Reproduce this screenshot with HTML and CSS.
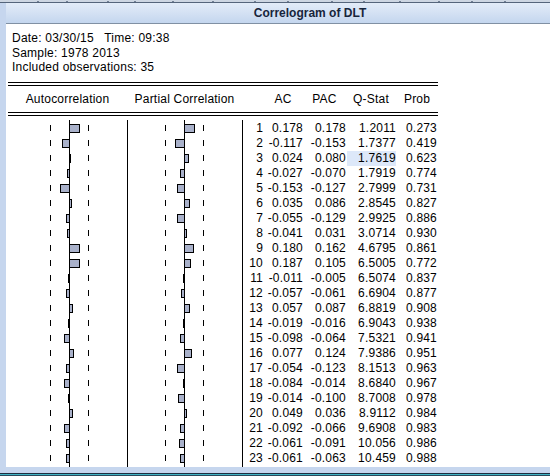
FILE: index.html
```html
<!DOCTYPE html>
<html>
<head>
<meta charset="utf-8">
<title>Correlogram of DLT</title>
<link rel="stylesheet" href="styles.css">
</head>
<body>
<div class="topbar">
  <svg class="ticks" width="550" height="3" viewBox="0 0 550 3">
    <path d="M37 2 L38 1 L39 2 M66 2 L67 1 L68 2 M107 2 L108 1 L109 2 M134 2 L135 1 L136 2 M172 2 L173 1 L174 2 M212 2 L213 1 L214 2 M254 2 L255 1 L256 2 M287 2 L288 1 L289 2 M331 2 L332 1 L333 2 M363 2 L364 1 L365 2 M399 2 L400 1 L401 2 M438 2 L439 1 L440 2 M471 2 L472 1 L473 2 M504 2 L505 1 L506 2" stroke="#5a6a80" stroke-width="0.8" fill="none"/>
  </svg>
</div>
<div class="frame">
  <div class="side"></div>
  <div class="window">
    <div class="titlebar">Correlogram of DLT</div>
    <div class="content">
      <div class="info">
        <div>Date: 03/30/15&nbsp;&nbsp; Time: 09:38</div>
        <div>Sample: 1978 2013</div>
        <div>Included observations: 35</div>
      </div>
      <div class="table">
        <div class="rule"></div>
        <div class="cols head">
          <div>Autocorrelation</div>
          <div>Partial Correlation</div>
          <div></div>
          <div>AC</div>
          <div>PAC</div>
          <div>Q-Stat</div>
          <div>Prob</div>
        </div>
        <div class="rule"></div>
        <div class="tbody">
          <div class="cols row"><div class="g g1"><span class="neg"></span><span class="pos"><i class="bar" style="width:11px"></i></span></div><div class="g g2"><span class="neg"></span><span class="pos"><i class="bar" style="width:11px"></i></span></div><div class="n">1</div><div class="n">0.178</div><div class="n">0.178</div><div class="n">1.2011</div><div class="n p">0.273</div></div>
          <div class="cols row"><div class="g g1"><span class="neg"><i class="bar" style="width:8px"></i></span><span class="pos"></span></div><div class="g g2"><span class="neg"><i class="bar" style="width:10px"></i></span><span class="pos"></span></div><div class="n">2</div><div class="n">-0.117</div><div class="n">-0.153</div><div class="n">1.7377</div><div class="n p">0.419</div></div>
          <div class="cols row"><div class="g g1"><span class="neg"></span><span class="pos"><i class="bar" style="width:2px"></i></span></div><div class="g g2"><span class="neg"></span><span class="pos"><i class="bar" style="width:5px"></i></span></div><div class="n">3</div><div class="n">0.024</div><div class="n">0.080</div><div class="n hl">1.7619</div><div class="n p">0.623</div></div>
          <div class="cols row"><div class="g g1"><span class="neg"><i class="bar" style="width:3px"></i></span><span class="pos"></span></div><div class="g g2"><span class="neg"><i class="bar" style="width:5px"></i></span><span class="pos"></span></div><div class="n">4</div><div class="n">-0.027</div><div class="n">-0.070</div><div class="n">1.7919</div><div class="n p">0.774</div></div>
          <div class="cols row"><div class="g g1"><span class="neg"><i class="bar" style="width:10px"></i></span><span class="pos"></span></div><div class="g g2"><span class="neg"><i class="bar" style="width:8px"></i></span><span class="pos"></span></div><div class="n">5</div><div class="n">-0.153</div><div class="n">-0.127</div><div class="n">2.7999</div><div class="n p">0.731</div></div>
          <div class="cols row"><div class="g g1"><span class="neg"></span><span class="pos"><i class="bar" style="width:3px"></i></span></div><div class="g g2"><span class="neg"></span><span class="pos"><i class="bar" style="width:6px"></i></span></div><div class="n">6</div><div class="n">0.035</div><div class="n">0.086</div><div class="n">2.8545</div><div class="n p">0.827</div></div>
          <div class="cols row"><div class="g g1"><span class="neg"><i class="bar" style="width:4px"></i></span><span class="pos"></span></div><div class="g g2"><span class="neg"><i class="bar" style="width:8px"></i></span><span class="pos"></span></div><div class="n">7</div><div class="n">-0.055</div><div class="n">-0.129</div><div class="n">2.9925</div><div class="n p">0.886</div></div>
          <div class="cols row"><div class="g g1"><span class="neg"><i class="bar" style="width:3px"></i></span><span class="pos"></span></div><div class="g g2"><span class="neg"></span><span class="pos"><i class="bar" style="width:3px"></i></span></div><div class="n">8</div><div class="n">-0.041</div><div class="n">0.031</div><div class="n">3.0714</div><div class="n p">0.930</div></div>
          <div class="cols row"><div class="g g1"><span class="neg"></span><span class="pos"><i class="bar" style="width:11px"></i></span></div><div class="g g2"><span class="neg"></span><span class="pos"><i class="bar" style="width:10px"></i></span></div><div class="n">9</div><div class="n">0.180</div><div class="n">0.162</div><div class="n">4.6795</div><div class="n p">0.861</div></div>
          <div class="cols row"><div class="g g1"><span class="neg"></span><span class="pos"><i class="bar" style="width:11px"></i></span></div><div class="g g2"><span class="neg"></span><span class="pos"><i class="bar" style="width:7px"></i></span></div><div class="n">10</div><div class="n">0.187</div><div class="n">0.105</div><div class="n">6.5005</div><div class="n p">0.772</div></div>
          <div class="cols row"><div class="g g1"><span class="neg"><i class="bar" style="width:2px"></i></span><span class="pos"></span></div><div class="g g2"><span class="neg"><i class="bar" style="width:2px"></i></span><span class="pos"></span></div><div class="n">11</div><div class="n">-0.011</div><div class="n">-0.005</div><div class="n">6.5074</div><div class="n p">0.837</div></div>
          <div class="cols row"><div class="g g1"><span class="neg"><i class="bar" style="width:4px"></i></span><span class="pos"></span></div><div class="g g2"><span class="neg"><i class="bar" style="width:4px"></i></span><span class="pos"></span></div><div class="n">12</div><div class="n">-0.057</div><div class="n">-0.061</div><div class="n">6.6904</div><div class="n p">0.877</div></div>
          <div class="cols row"><div class="g g1"><span class="neg"></span><span class="pos"><i class="bar" style="width:4px"></i></span></div><div class="g g2"><span class="neg"></span><span class="pos"><i class="bar" style="width:6px"></i></span></div><div class="n">13</div><div class="n">0.057</div><div class="n">0.087</div><div class="n">6.8819</div><div class="n p">0.908</div></div>
          <div class="cols row"><div class="g g1"><span class="neg"><i class="bar" style="width:2px"></i></span><span class="pos"></span></div><div class="g g2"><span class="neg"><i class="bar" style="width:2px"></i></span><span class="pos"></span></div><div class="n">14</div><div class="n">-0.019</div><div class="n">-0.016</div><div class="n">6.9043</div><div class="n p">0.938</div></div>
          <div class="cols row"><div class="g g1"><span class="neg"><i class="bar" style="width:6px"></i></span><span class="pos"></span></div><div class="g g2"><span class="neg"><i class="bar" style="width:5px"></i></span><span class="pos"></span></div><div class="n">15</div><div class="n">-0.098</div><div class="n">-0.064</div><div class="n">7.5321</div><div class="n p">0.941</div></div>
          <div class="cols row"><div class="g g1"><span class="neg"></span><span class="pos"><i class="bar" style="width:5px"></i></span></div><div class="g g2"><span class="neg"></span><span class="pos"><i class="bar" style="width:8px"></i></span></div><div class="n">16</div><div class="n">0.077</div><div class="n">0.124</div><div class="n">7.9386</div><div class="n p">0.951</div></div>
          <div class="cols row"><div class="g g1"><span class="neg"><i class="bar" style="width:4px"></i></span><span class="pos"></span></div><div class="g g2"><span class="neg"><i class="bar" style="width:8px"></i></span><span class="pos"></span></div><div class="n">17</div><div class="n">-0.054</div><div class="n">-0.123</div><div class="n">8.1513</div><div class="n p">0.963</div></div>
          <div class="cols row"><div class="g g1"><span class="neg"><i class="bar" style="width:6px"></i></span><span class="pos"></span></div><div class="g g2"><span class="neg"><i class="bar" style="width:2px"></i></span><span class="pos"></span></div><div class="n">18</div><div class="n">-0.084</div><div class="n">-0.014</div><div class="n">8.6840</div><div class="n p">0.967</div></div>
          <div class="cols row"><div class="g g1"><span class="neg"><i class="bar" style="width:2px"></i></span><span class="pos"></span></div><div class="g g2"><span class="neg"><i class="bar" style="width:7px"></i></span><span class="pos"></span></div><div class="n">19</div><div class="n">-0.014</div><div class="n">-0.100</div><div class="n">8.7008</div><div class="n p">0.978</div></div>
          <div class="cols row"><div class="g g1"><span class="neg"></span><span class="pos"><i class="bar" style="width:4px"></i></span></div><div class="g g2"><span class="neg"></span><span class="pos"><i class="bar" style="width:3px"></i></span></div><div class="n">20</div><div class="n">0.049</div><div class="n">0.036</div><div class="n">8.9112</div><div class="n p">0.984</div></div>
          <div class="cols row"><div class="g g1"><span class="neg"><i class="bar" style="width:6px"></i></span><span class="pos"></span></div><div class="g g2"><span class="neg"><i class="bar" style="width:5px"></i></span><span class="pos"></span></div><div class="n">21</div><div class="n">-0.092</div><div class="n">-0.066</div><div class="n">9.6908</div><div class="n p">0.983</div></div>
          <div class="cols row"><div class="g g1"><span class="neg"><i class="bar" style="width:4px"></i></span><span class="pos"></span></div><div class="g g2"><span class="neg"><i class="bar" style="width:6px"></i></span><span class="pos"></span></div><div class="n">22</div><div class="n">-0.061</div><div class="n">-0.091</div><div class="n">10.056</div><div class="n p">0.986</div></div>
          <div class="cols row"><div class="g g1"><span class="neg"><i class="bar" style="width:4px"></i></span><span class="pos"></span></div><div class="g g2"><span class="neg"><i class="bar" style="width:5px"></i></span><span class="pos"></span></div><div class="n">23</div><div class="n">-0.061</div><div class="n">-0.063</div><div class="n">10.459</div><div class="n p">0.988</div></div>
        </div>
      </div>
    </div>
  </div>
</div>
<div class="bottombar"></div>
</body>
</html>
```
FILE: styles.css
```css
html, body {
  margin: 0;
  padding: 0;
}
body {
  width: 550px;
  height: 476px;
  overflow: hidden;
  display: flex;
  flex-direction: column;
  background: #c6d6ee;
  font-family: "Liberation Sans", Arial, sans-serif;
  font-size: 12px;
  color: #000;
}
.topbar {
  height: 3px;
  flex: none;
  background: linear-gradient(#cdd6e2 0, #cdd6e2 2px, #55657b 2px, #55657b 3px);
}
.ticks {
  display: block;
}
.frame {
  flex: 1;
  display: flex;
  min-height: 0;
}
.side {
  width: 6px;
  flex: none;
  background: #c6d6ee;
}
.window {
  flex: 1;
  display: flex;
  flex-direction: column;
  background: #fff;
}
.titlebar {
  height: 20px;
  line-height: 20px;
  flex: none;
  padding-left: 64px;
  text-align: center;
  font-weight: bold;
  color: #18253c;
  border-bottom: 1px solid #8090a3;
  background: linear-gradient(#e3ecf8, #c4d6ee);
}
.content {
  flex: 1;
  padding: 7px 0 0 2px;
}
.info {
  line-height: 14.5px;
  padding-left: 4px;
  margin-bottom: 7.5px;
  letter-spacing: 0.22px;
}
.table {
  width: 430px;
}
.rule {
  height: 2px;
  border-top: 1px solid #000;
  border-bottom: 1px solid #000;
}
.cols {
  display: grid;
  grid-template-columns: 119px 115px 21px 40px 43px 50px 42px;
}
.head {
  height: 26px;
  line-height: 26px;
  text-align: center;
  white-space: nowrap;
  letter-spacing: 0.2px;
}
.tbody {
  margin-top: 4px;
  height: 347px;
  box-sizing: border-box;
  padding-top: 1.3px;
  background:
    linear-gradient(#000, #000) 61px 0 / 1px 100% no-repeat,
    linear-gradient(#000, #000) 119px 0 / 1px 100% no-repeat,
    linear-gradient(#000, #000) 176px 0 / 1px 100% no-repeat,
    linear-gradient(#000, #000) 234px 0 / 1px 100% no-repeat;
}
.row {
  height: 15px;
  line-height: 15px;
  letter-spacing: 0.2px;
}
.g {
  display: flex;
  align-items: center;
}
.g1 {
  background:
    linear-gradient(#000, #000) 42px 45% / 1px 6px no-repeat,
    linear-gradient(#000, #000) 80px 45% / 1px 6px no-repeat;
}
.g2 {
  background:
    linear-gradient(#000, #000) 38px 45% / 1px 6px no-repeat,
    linear-gradient(#000, #000) 76px 45% / 1px 6px no-repeat;
}
.neg {
  display: flex;
  justify-content: flex-end;
  flex: none;
}
.g1 .neg {
  width: 62px;
}
.g2 .neg {
  width: 58px;
}
.pos {
  display: flex;
  margin-left: -1px;
}
.bar {
  display: block;
  height: 9px;
  margin-top: -1px;
  box-sizing: border-box;
  border: 1px solid #000;
  background: #a9b1ca;
}
.n {
  text-align: right;
  white-space: nowrap;
}
.p {
  padding-right: 1px;
}
.hl {
  margin-left: 1px;
  background: #dde8f9;
}
.bottombar {
  height: 9px;
  flex: none;
  background: linear-gradient(#c6d6ee 0, #c6d6ee 6px, #1e2e40 6px, #1e2e40 7px, #40b4c4 7px, #40b4c4 8px, #2a4a5c 8px);
}
```
